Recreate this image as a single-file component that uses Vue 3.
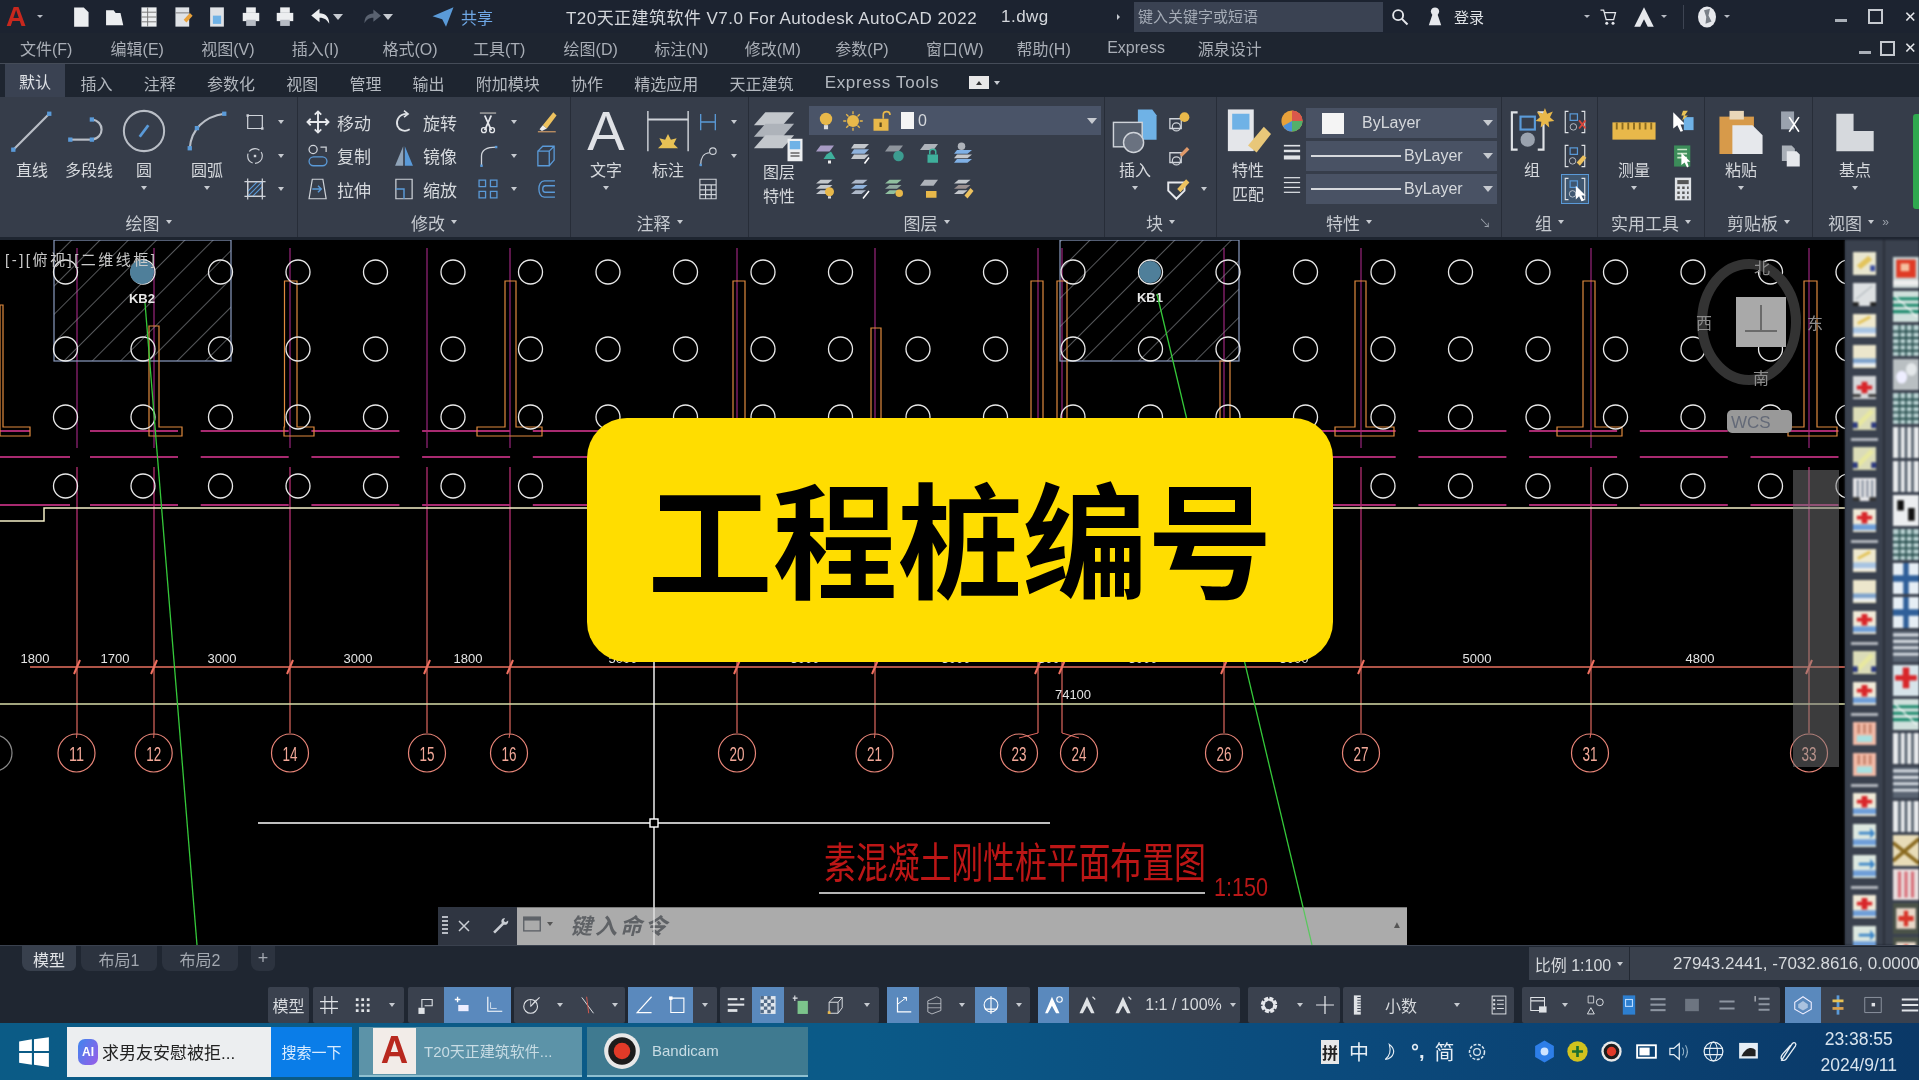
<script setup>
import { h } from 'vue'

const G = '#cfd3d9'
const B = '#5a9ad8'
const Y = '#e8b84a'
const line = (d, c = G, w = 1.5) => `<path d="${d}" fill="none" stroke="${c}" stroke-width="${w}"/>`
const dot = (x, y, c = B, s = 3) => `<rect x="${x - s / 2}" y="${y - s / 2}" width="${s}" height="${s}" fill="${c}"/>`

const icons = {
  line: line('M3 29L28 4', '#b9bec6') + dot(28, 4) + dot(3, 29),
  pline: line('M3 22H18', '#b9bec6') + line('M18 8C27 9 27 21 18 22', '#b9bec6') + dot(3, 22) + dot(18, 22) + dot(18, 8),
  circle: '<circle cx="16" cy="16" r="14" fill="none" stroke="#b9bec6" stroke-width="1.4"/>' + line('M13 20L19 12', B, 2),
  arc: line('M4 28C5 15 14 6 28 4', '#b9bec6') + dot(28, 4) + dot(4, 28) + dot(9, 14),
  rect: line('M7 8H25V24H7Z') + dot(7, 8, G) + dot(25, 24, G),
  ellipse: '<circle cx="16" cy="16" r="9" fill="none" stroke="#cfd3d9" stroke-width="1.4" stroke-dasharray="14 3"/>' + dot(16, 16, G),
  hatch: line('M7 7H25V25H7Z') + line('M7 19L19 7M7 25L25 7M13 25L25 13', B, 1.5) + line('M3 7H29M3 25H29M7 3V29M25 3V29'),
  move: line('M16 3V29M3 16H29', '#e6e8ec', 2.4) + line('M12 7L16 3L20 7M12 25L16 29L20 25M7 12L3 16L7 20M25 12L29 16L25 20', '#e6e8ec', 2.2),
  rotate: line('M20 6C8 6 6 16 8 21C10 26 17 29 23 25', '#dfe2e6', 2.2) + line('M16 2L21 6L16 10', '#dfe2e6', 2),
  copy: '<circle cx="10" cy="8" r="5" fill="none" stroke="#cfd3d9" stroke-width="1.6"/>' + line('M19 5H26V11', G, 1.6) + '<rect x="5" y="17" width="22" height="11" rx="5.5" fill="none" stroke="#5a9ad8" stroke-width="1.6"/>',
  mirror: `<path d="M15 4V28H5Z" fill="#8fa3b8"/><path d="M17 4V28H27Z" fill="#5a9ad8"/>`,
  stretch: line('M9 4H22L26 28H5Z', G) + line('M9 16H20M16 12L20 16L16 20', B, 1.8),
  scale: line('M6 4H26V28H6Z') + line('M6 16H16V28', B, 1.8),
  trim: line('M6 5H26', '#999', 2) + line('M12 8L20 26M20 8L12 26', '#e6e8ec', 2.2) + '<circle cx="11" cy="26" r="3" fill="none" stroke="#e6e8ec" stroke-width="1.6"/><circle cx="21" cy="26" r="3" fill="none" stroke="#e6e8ec" stroke-width="1.6"/>',
  erase: line('M6 28H28', '#c96', 1.5) + '<path d="M12 20L25 4L29 8L17 24Z" fill="#edc25f"/><path d="M12 20L17 24L11 27L8 25Z" fill="#eee"/>',
  fillet: line('M8 28V16C8 9 13 5 26 5', G, 1.6) + dot(8, 28) + dot(26, 5),
  cube: line('M6 10H20V28H6ZM6 10L12 4H26V21L20 28M20 10L26 4', B, 1.6),
  array: line('M5 5H13V13H5ZM19 5H27V13H19ZM5 19H13V27H5ZM19 19H27V27H19Z', B, 1.6),
  offset: line('M27 6H14C5 6 5 26 14 26H27', B, 1.6) + line('M27 12H15C11 12 11 20 15 20H27', B, 1.6),
  dim: line('M2 2V30M30 2V30', G, 1) + line('M2 8H30', G, 1.4) + '<path d="M16 18l2 4 4-1-2 4 3 3H9l3-3-2-4 4 1Z" fill="#e8c255"/>',
  dimh: line('M7 6V26M25 6V26M7 16H25', B, 1.6),
  leader: line('M7 27C7 18 11 12 18 12', G, 1.5) + '<circle cx="22" cy="10" r="4" fill="none" stroke="#cfd3d9" stroke-width="1.4"/>' + dot(7, 27),
  table: line('M6 4H26V28H6ZM6 11H26M6 17H26M6 23H26M13 11V28M20 11V28', '#cfd3d9', 1.4),
  layers: '<path d="M10 3H30L22 12H2Z" fill="#c3c7cc"/><path d="M10 11H30L22 20H2Z" fill="#aeb3ba"/><path d="M10 19H30L22 28H2Z" fill="#c3c7cc"/>',
  phone: '<rect x="6" y="1" width="20" height="30" fill="#eceef0"/><rect x="9" y="4" width="14" height="11" fill="#6fb2e6"/>' + line('M10 20H22M10 24H22', '#666', 2),
  bulb: `<circle cx="16" cy="13" r="9" fill="${Y}"/><rect x="13" y="22" width="6" height="6" fill="#ddd"/>`,
  sun: `<circle cx="16" cy="16" r="8" fill="${Y}"/>` + line('M16 3V7M16 25V29M3 16H7M25 16H29M7 7L10 10M22 22L25 25M25 7L22 10M10 22L7 25', Y, 1.8),
  lock: `<rect x="6" y="13" width="20" height="16" fill="${Y}"/>` + line('M19 13V8C19 2 28 2 28 8', Y, 2.2) + '<rect x="14" y="18" width="3" height="6" fill="#5b4a1d"/>',
  lyA: '<path d="M10 6H28L22 14H4Z" fill="#a79bc4"/><path d="M18 18L24 14L30 24H14Z" fill="#3fb09c"/><rect x="20" y="26" width="4" height="4" fill="#eee"/>',
  lyB: '<path d="M8 4H28L22 10H4Z" fill="#c3c7cc"/><path d="M8 11H28L22 17H4Z" fill="#8fb2dc"/><path d="M8 18H28L22 24H4Z" fill="#c3c7cc"/>' + line('M22 30L28 22', '#fff', 2),
  lyC: '<path d="M10 6H28L22 14H4Z" fill="#8e949c"/><circle cx="22" cy="20" r="7" fill="#3c9c90"/>',
  lyD: '<path d="M10 4H28L22 12H4Z" fill="#aeb3ba"/><rect x="14" y="18" width="14" height="11" fill="#3fb09c"/>' + line('M17 18V14C17 10 25 10 25 14V18', '#3fb09c', 2),
  lyE: '<circle cx="14" cy="7" r="5" fill="#aeb3ba"/><path d="M8 12H28L22 17H4Z" fill="#7fb0e6"/><path d="M8 18H28L22 23H4Z" fill="#c3c7cc"/><path d="M8 24H28L22 29H4Z" fill="#7fb0e6"/>',
  lyF: '<path d="M10 5H26L20 10H4Z" fill="#c3c7cc"/><path d="M10 12H26L20 17H4Z" fill="#c3c7cc"/><path d="M10 19H24L18 24H4Z" fill="#c3c7cc"/>' + `<circle cx="22" cy="21" r="6" fill="${Y}"/><rect x="20" y="27" width="4" height="3" fill="#ddd"/>`,
  lyG: '<path d="M10 5H26L20 10H4Z" fill="#aeb8c8"/><path d="M10 12H26L20 17H4Z" fill="#8fb2dc"/><path d="M10 19H24L18 24H4Z" fill="#aeb8c8"/>' + line('M20 30L28 20', '#fff', 2),
  lyH: '<path d="M10 5H26L20 10H4Z" fill="#8fbf9f"/><path d="M10 12H26L20 17H4Z" fill="#8fa89f"/><path d="M10 19H22L16 24H4Z" fill="#8fbf9f"/>' + `<circle cx="23" cy="23" r="5" fill="${Y}"/>`,
  lyI: '<path d="M10 5H28L22 13H4Z" fill="#aeb3ba"/>' + `<rect x="12" y="20" width="14" height="9" fill="${Y}"/>`,
  lyJ: '<path d="M10 5H26L20 10H4Z" fill="#c3c7cc"/><path d="M10 12H26L20 17H4Z" fill="#9a8f8f"/><path d="M10 19H22L16 24H4Z" fill="#c3c7cc"/><path d="M18 26L26 16L30 20L22 30Z" fill="#edc25f"/>',
  insert: '<path d="M18 1H28L31 5V22H18Z" fill="#6fb2e6"/><rect x="1" y="10" width="20" height="17" fill="#555e6c" stroke="#cfd3d9"/><circle cx="15" cy="24" r="7" fill="#6a7280" stroke="#cfd3d9"/>',
  blockA: line('M6 12H20V24H6Z', G, 1.6) + `<circle cx="14" cy="22" r="5" fill="none" stroke="#cfd3d9" stroke-width="1.5"/><circle cx="24" cy="10" r="6" fill="${Y}"/>`,
  blockB: line('M6 12H20V24H6Z', G, 1.6) + '<circle cx="14" cy="22" r="5" fill="none" stroke="#cfd3d9" stroke-width="1.5"/><path d="M18 14L27 5L30 8L21 17Z" fill="#e09a6a"/>',
  blockC: '<path d="M4 8H24V18L14 28L4 18Z" fill="none" stroke="#e6e8ec" stroke-width="2.4"/><path d="M15 16L26 4L30 8L19 20Z" fill="#edc25f"/>',
  match: '<rect x="2" y="1" width="18" height="29" fill="#e4e6ea"/><rect x="5" y="4" width="12" height="11" fill="#6fb2e6"/><path d="M16 26L27 13L32 18L22 31Z" fill="#e8c779"/>',
  wheel: '<circle cx="16" cy="16" r="13" fill="#e8a13a"/><path d="M16 16L16 3A13 13 0 0 1 29 16Z" fill="#d9584c"/><path d="M16 16L29 16A13 13 0 0 1 16 29Z" fill="#54b06a"/><path d="M16 16L16 29A13 13 0 0 1 5 22Z" fill="#4c8fd9"/>',
  weight: '<rect x="6" y="6" width="20" height="2" fill="#dfe2e6"/><rect x="6" y="12" width="20" height="3" fill="#dfe2e6"/><rect x="6" y="19" width="20" height="5" fill="#dfe2e6"/>',
  ltype: line('M6 7H26', '#dfe2e6', 1.5) + line('M6 13H26', '#dfe2e6', 1.5) + line('M6 19H26', '#dfe2e6', 1.5) + line('M6 25H26', '#dfe2e6', 1.5),
  group: line('M6 3H2V29H6M20 3H24V29H20', '#dfe2e6', 1.5) + `<rect x="8" y="6" width="10" height="9" fill="none" stroke="${B}" stroke-width="1.5"/><circle cx="13" cy="22" r="5" fill="#9aa2ae"/><path d="M25 0l1.5 4 4-1.5-2 4 3 2.5-4 .5.5 4-3-2.5-3 2.5.5-4-4-.5 3-2.5-2-4 4 1.5Z" fill="${Y}"/>`,
  groupX: line('M8 3H4V29H8M24 3H28V29H24', '#dfe2e6', 1.4) + `<rect x="10" y="6" width="9" height="8" fill="none" stroke="${B}" stroke-width="1.5"/><circle cx="14" cy="22" r="4" fill="none" stroke="#cfd3d9"/>` + line('M21 14L29 24M29 14L21 24', '#d9483c', 2.2),
  groupE: line('M8 3H4V29H8M24 3H28V29H24', '#dfe2e6', 1.4) + `<rect x="10" y="6" width="9" height="8" fill="none" stroke="${B}" stroke-width="1.5"/><circle cx="13" cy="22" r="4" fill="none" stroke="#cfd3d9"/><path d="M18 24L26 15L30 18L22 28Z" fill="#edc25f"/>`,
  groupS: line('M8 3H4V29H8M24 3H28V29H24', '#dfe2e6', 1.4) + `<rect x="10" y="6" width="9" height="8" fill="none" stroke="${B}" stroke-width="1.5"/><circle cx="13" cy="22" r="4" fill="none" stroke="#cfd3d9"/><path d="M17 12V29L21 25L24 31L27 30L24 24L29 24Z" fill="#fff"/>`,
  ruler: `<rect x="1" y="10" width="30" height="12" fill="${Y}"/>` + line('M4 10V15M8 10V15M12 10V15M16 10V15M20 10V15M24 10V15M28 10V15', '#8a6a20', 1.3),
  quick: '<path d="M4 4V24L9 20L13 28L16 27L13 19L19 19Z" fill="#fff"/><rect x="17" y="10" width="12" height="16" fill="#6fb2e6"/><path d="M16 2L22 2L18 8H22L15 14L17 8H14Z" fill="#e8c255"/>',
  board: '<rect x="5" y="3" width="20" height="26" fill="#3c8d5a"/>' + line('M9 8H21M9 13H21M9 18H21', '#c8e8c8', 2) + '<path d="M14 12V27L18 24L21 30L23 29L21 23L25 23Z" fill="#fff"/>',
  calc: '<rect x="6" y="2" width="20" height="28" fill="#dfe2e6"/><rect x="9" y="5" width="14" height="5" fill="#555"/><path d="M9 13h3v3H9zM15 13h3v3h-3zM21 13h2v3h-2zM9 19h3v3H9zM15 19h3v3h-3zM21 19h2v3h-2zM9 25h3v3H9zM15 25h3v3h-3zM21 25h2v3h-2z" fill="#555"/>',
  paste: '<rect x="1" y="6" width="24" height="26" fill="#d79a4a"/><rect x="8" y="2" width="10" height="6" fill="#e9d7b9"/><path d="M10 12H24L31 19V32H10Z" fill="#e6e8ec"/>',
  cut: '<rect x="5" y="3" width="16" height="22" fill="#9aa2ae"/>' + line('M15 10L27 28M27 10L15 28', '#fff', 2),
  pcopy: '<path d="M6 3H18L22 7V22H6Z" fill="#aab0b8"/><path d="M12 10H24L28 14V29H12Z" fill="#e6e8ec"/>',
  base: '<path d="M3 4H15V16H29V30H3Z" fill="#d6d9dd"/>',
  search: '<circle cx="13" cy="13" r="8" fill="none" stroke="#e6e8ec" stroke-width="3"/>' + line('M19 19L28 28', '#e6e8ec', 3.2),
  user: '<circle cx="16" cy="8" r="6" fill="#e6e8ec"/><path d="M12 13H20L25 28H7Z" fill="#e6e8ec"/>',
  cart: line('M4 5H9L13 20H25L28 9H11', '#e6e8ec', 2) + '<circle cx="14" cy="26" r="2.4" fill="#e6e8ec"/><circle cx="24" cy="26" r="2.4" fill="#e6e8ec"/>',
  aTri: '<path d="M16 3L29 29H21L16 19L11 29H3Z" fill="#e6e8ec"/>',
  globe: '<ellipse cx="16" cy="16" rx="12" ry="14" fill="#e6e8ec"/><path d="M12 7L20 5L18 14L22 22L14 25L15 16Z" fill="#7a8088"/>',
  file: '<path d="M6 2H20L27 9V30H6Z" fill="#eceef0"/>',
  open: '<path d="M3 6H14L17 10H24L28 28H3Z" fill="#eceef0"/>',
  save: '<rect x="5" y="2" width="22" height="28" fill="#eceef0"/>' + line('M5 9H27M5 16H27M5 23H27M14 2V30', '#777', 1.4),
  saveas: '<rect x="5" y="2" width="20" height="28" fill="#dfe2e6"/><path d="M17 20L26 10L30 14L21 24Z" fill="#e8a13a"/>' + line('M5 10H25', '#777', 1.4),
  plot: '<rect x="6" y="2" width="20" height="28" fill="#dfe2e6"/><rect x="10" y="14" width="12" height="12" fill="#6fb2e6"/>',
  printer: '<rect x="9" y="2" width="14" height="8" fill="#eceef0"/><rect x="4" y="10" width="24" height="12" fill="#eceef0"/><rect x="9" y="20" width="14" height="9" fill="#b7bcc4"/>',
  undo: '<path d="M14 5L3 14L14 23V17C21 17 24 20 27 25C27 16 22 11 14 11Z" fill="#eceef0"/>',
  redo: '<path d="M18 5L29 14L18 23V17C11 17 8 20 5 25C5 16 10 11 18 11Z" fill="#5a6270"/>',
  share: '<path d="M2 15L30 3L20 29L15 19Z" fill="#5a9ad8"/>',
  ctrlX: line('M8 8L24 24M24 8L8 24', '#c9cdd3', 2.4),
  wrench: '<path d="M24 3C19 3 17 8 19 11L5 25L8 28L22 14C26 15 30 12 29 7L25 10L22 8Z" fill="#c9cdd3"/>',
  cmd: '<rect x="4" y="6" width="24" height="20" fill="none" stroke="#5e6268" stroke-width="2"/><rect x="4" y="6" width="24" height="5" fill="#5e6268"/>',
  sGrid: line('M10 3V29M20 3V29M3 11H29M3 21H29', '#dfe2e6', 1.7),
  sDots: '<path d="M7 6h4v4H7zM15 6h4v4h-4zM23 6h4v4h-4zM7 14h4v4H7zM15 14h4v4h-4zM23 14h4v4h-4zM7 22h4v4H7zM15 22h4v4h-4zM23 22h4v4h-4z" fill="#dfe2e6"/>',
  sMode: '<rect x="5" y="20" width="9" height="9" fill="#dfe2e6"/>' + line('M10 20V8H25V17H14', '#dfe2e6', 1.6),
  sPlus: line('M7 8H15M11 4V12', '#fff', 2) + '<rect x="12" y="16" width="15" height="9" fill="#eef"/>',
  sOrtho: line('M7 4V25H28', '#fff', 1.6) + line('M11 12V21H20', '#dbe6f2', 1.3),
  sPolar: '<circle cx="14" cy="18" r="10" fill="none" stroke="#dfe2e6" stroke-width="1.6"/>' + line('M14 18L27 5', '#dfe2e6', 1.6) + line('M14 18L22 8M14 9V18', '#dfe2e6', 1),
  sCross: line('M7 5L24 28', '#dfe2e6', 1.4) + line('M14 4L17 28', '#d9584c', 1.4),
  sAngle: line('M27 4L6 27H27', '#fff', 1.7),
  sBox: line('M7 6H26V27H7Z', '#fff', 1.6) + dot(7, 6, '#fff', 5),
  sWeight: '<rect x="4" y="6" width="14" height="3" fill="#dfe2e6"/><rect x="22" y="6" width="6" height="3" fill="#dfe2e6"/><rect x="4" y="14" width="24" height="3" fill="#dfe2e6"/><rect x="4" y="22" width="14" height="4" fill="#dfe2e6"/>',
  sCheck: '<rect x="5" y="3" width="22" height="26" fill="#dfe6ee"/><path d="M5 3h5v5H5zM15 3h5v5h-5zM10 8h5v5h-5zM20 8h5v5h-5zM5 13h5v5H5zM15 13h5v5h-5zM10 18h5v5h-5zM20 18h5v5h-5zM5 23h5v5H5zM15 23h5v5h-5z" fill="#526a86"/>',
  sGreen: '<rect x="11" y="10" width="15" height="19" fill="#7cc48c"/>' + line('M4 6H11M7 2V10', '#dfe2e6', 1.6),
  sCube: line('M6 12H19V28H6ZM6 12L13 5H25V20L19 28M19 12L25 5', '#dfe2e6', 1.4) + dot(6, 27, Y, 4),
  sXY: line('M8 5V26H28', '#fff', 1.8) + line('M8 15L21 5M21 5L16 5M21 5L21 10', '#fff', 1.4),
  sIso: line('M7 10L20 4L26 7V24L13 29L7 26Z', '#c9cdd3', 1.2) + line('M7 14H26M7 20H26', '#c9cdd3', 1),
  sGizmo: '<circle cx="16" cy="16" r="10" fill="none" stroke="#fff" stroke-width="1.6"/>' + line('M16 3V29M7 22L25 22', '#fff', 1.6),
  sAnno: '<path d="M13 4L24 28H19L13 17L7 28H3Z" fill="#fff"/><circle cx="24" cy="8" r="4" fill="none" stroke="#fff" stroke-width="1.6"/>',
  sAnnoB: '<path d="M16 4L27 28H22L16 17L10 28H5Z" fill="#dfe2e6"/>' + line('M24 4L28 8', '#dfe2e6', 1.6),
  sGear: '<circle cx="16" cy="16" r="9" fill="none" stroke="#e6e8ec" stroke-width="6" stroke-dasharray="5 2"/><circle cx="16" cy="16" r="8" fill="none" stroke="#e6e8ec" stroke-width="3"/>',
  sAdd: line('M16 3V29M3 16H29', '#e6e8ec', 1.8),
  sRuler: '<rect x="10" y="2" width="10" height="28" fill="#dfe2e6"/>' + line('M15 5H20M15 9H20M15 13H20M15 17H20M15 21H20M15 25H20', '#3a4250', 1.5),
  sList: '<rect x="6" y="3" width="20" height="26" fill="none" stroke="#dfe2e6" stroke-width="1.4"/>' + line('M13 9H23M13 15H23M13 21H23', '#dfe2e6', 1.5) + dot(9, 9, '#dfe2e6') + dot(9, 15, '#dfe2e6') + dot(9, 21, '#dfe2e6'),
  sWin: line('M4 5H24V24H4ZM4 10H24', '#dfe2e6', 1.5) + '<rect x="16" y="18" width="11" height="9" fill="#dfe2e6"/>',
  sTool: line('M6 3H14V13H6Z', '#dfe2e6', 1.2) + '<circle cx="23" cy="12" r="5" fill="none" stroke="#dfe2e6" stroke-width="1.4"/>' + line('M10 20L5 29H15Z', '#dfe2e6', 1.4),
  sBlue: '<rect x="7" y="2" width="18" height="28" fill="#2d7fd0"/><rect x="11" y="8" width="10" height="10" fill="none" stroke="#bcdcff" stroke-width="1.6"/>',
  sBars: '<rect x="5" y="6" width="22" height="3" fill="#8d95a1"/><rect x="5" y="14" width="22" height="3" fill="#8d95a1"/><rect x="5" y="22" width="22" height="3" fill="#8d95a1"/>',
  sSolid: '<rect x="6" y="7" width="20" height="18" fill="#6d7581"/>',
  sSwap: line('M5 11H27M5 21H27', '#8d95a1', 3),
  sLst: line('M11 7H27M11 15H27M11 23H27', '#8d95a1', 3) + line('M6 3V11', '#dfe2e6', 1.4),
  sHex: '<path d="M16 4L28 12V22L16 29L4 22V12Z" fill="none" stroke="#eef" stroke-width="1.6"/><path d="M16 10L23 15V20L16 24L9 20V15Z" fill="#dfe8f5" opacity=".6"/>',
  sLight: '<rect x="14" y="2" width="4" height="28" fill="#5a9ad8"/><rect x="8" y="8" width="16" height="4" fill="#e8c255"/><rect x="8" y="19" width="16" height="4" fill="#d9a04c"/>',
  sIso2: line('M4 5H28V27H4Z', '#9aa2ae', 1.2) + '<rect x="14" y="13" width="5" height="5" fill="#dfe2e6"/>',
  sMenu: line('M4 8H28M4 16H28M4 24H28', '#dfe2e6', 2.6),
  win: '<path d="M2 6L14 4V15H2ZM16 4L30 2V15H16ZM2 17H14V28L2 26ZM16 17H30V30L16 28Z" fill="#fff"/>',
  moon: line('M15 5C25 12 23 24 9 27C17 21 17 12 15 5Z', '#e6eef5', 1.6),
  trayGear: '<circle cx="16" cy="16" r="10" fill="none" stroke="#d9e6f0" stroke-width="2" stroke-dasharray="4 2"/><circle cx="16" cy="16" r="4.5" fill="none" stroke="#d9e6f0" stroke-width="1.6"/>',
  trayShield: '<path d="M16 2L28 9V23L16 30L4 23V9Z" fill="#2d7ee8"/><circle cx="16" cy="16" r="5" fill="#cfe4ff"/>',
  trayPlus: '<circle cx="16" cy="16" r="13" fill="#d2c21e"/>' + line('M16 9V23M9 16H23', '#1d6e30', 3.4),
  trayRec: '<circle cx="16" cy="16" r="13" fill="#e8e8e8"/><circle cx="16" cy="16" r="10" fill="#1c1c1c"/><circle cx="16" cy="16" r="6" fill="#e13a28"/>',
  trayBat: '<rect x="4" y="8" width="24" height="16" fill="none" stroke="#fff" stroke-width="2.4"/><rect x="7" y="11" width="13" height="10" fill="#fff"/>',
  traySound: '<path d="M5 12H10L17 6V26L10 20H5Z" fill="none" stroke="#e6eef5" stroke-width="1.6"/>' + line('M21 11C23 14 23 18 21 21M25 8C28 13 28 19 25 24', '#9ab8cc', 1.3),
  trayNet: '<circle cx="16" cy="16" r="12" fill="none" stroke="#e6eef5" stroke-width="1.6"/><ellipse cx="16" cy="16" rx="5" ry="12" fill="none" stroke="#e6eef5" stroke-width="1.3"/>' + line('M4 12H28M4 20H28', '#e6eef5', 1.3),
  trayImg: '<rect x="4" y="5" width="24" height="20" fill="#e6eef5"/><path d="M7 22C12 11 20 9 25 14V22Z" fill="#222"/>',
  trayPen: line('M8 28L22 6C25 3 28 6 26 9L14 26C10 30 5 25 10 19L20 8', '#e6eef5', 1.7),
}

const Ic = (p) => h('svg', { viewBox: '0 0 32 32', width: p.s || 22, height: p.s || 22, innerHTML: icons[p.n] || '' })
Ic.props = ['n', 's']

const Tile = (p) => {
  const d = {
    y: '<rect width="24" height="24" fill="#e9e6cf"/><path d="M4 14L16 4L20 8L8 18Z" fill="#e3c45c"/><rect x="18" y="14" width="5" height="6" fill="#3d4fa0"/>',
    w: '<rect width="24" height="24" fill="#dde0e2"/><path d="M3 17L20 3" stroke="#9aa3a8"/><rect y="20" width="6" height="4" fill="#222"/><rect x="18" y="20" width="6" height="4" fill="#222"/>',
    b: '<rect width="24" height="24" fill="#efe9cf"/><path d="M5 10L18 3" stroke="#e3c45c" stroke-width="3"/><rect y="14" width="24" height="6" fill="#a8c4e2"/><rect y="20" width="24" height="2" fill="#eee"/>',
    l: '<rect width="24" height="24" fill="#ece6cc"/><rect y="14" width="24" height="5" fill="#7fa3cc"/><rect y="19" width="24" height="3" fill="#e8eef4"/>',
    r: '<rect width="24" height="24" fill="#d6d8da"/><path d="M9 6H15V10H20V14H15V18H9V14H4V10H9Z" fill="#d8262a"/><rect y="19" width="8" height="3" fill="#333"/><rect x="16" y="19" width="8" height="3" fill="#333"/>',
    g: '<rect width="24" height="24" fill="#dbdcb8"/><path d="M4 20L20 4" stroke="#e8e8a0" stroke-width="5"/><rect y="16" width="5" height="6" fill="#2d3a80"/><rect x="19" y="16" width="5" height="6" fill="#2d3a80"/>',
    m: '<rect width="24" height="24" fill="#e8e8ea"/><path d="M5 2V20M10 2V20M15 2V20M20 2V20" stroke="#7a8494" stroke-width="2"/><rect y="20" width="7" height="4" fill="#333"/><rect x="17" y="20" width="7" height="4" fill="#333"/>',
    p: '<rect width="24" height="24" fill="#f1b9a6"/><path d="M6 2V12M12 2V12M18 2V12" stroke="#b8725a" stroke-width="2"/><rect x="4" y="14" width="16" height="7" fill="#a8e0e0"/>',
    c: '<rect width="24" height="24" fill="#f0ead8"/><path d="M9 3H15V7H20V11H15V15H9V11H4V7H9Z" fill="#d8262a"/><rect y="16" width="24" height="6" fill="#6f9ed8"/>',
    a: '<rect width="24" height="24" fill="#dde8e0"/><path d="M6 8H18V4L23 10L18 15V11H6Z" fill="#3d86c8"/><rect y="16" width="24" height="6" fill="#6f9ed8"/>',
    redb: '<rect width="24" height="24" fill="#c8d2d2"/><rect x="3" y="2" width="18" height="14" fill="#e03a24"/><rect x="7" y="5" width="8" height="6" fill="#f5c0a0"/><rect y="18" width="24" height="4" fill="#eee"/>',
    gr: '<rect width="24" height="24" fill="#cfe0dc"/><path d="M0 6H24M0 11H24M0 16H24" stroke="#1d8a6d" stroke-width="2.4"/><path d="M2 4L22 20" stroke="#fff"/>',
    gd: '<rect width="24" height="24" fill="#b7d0d0"/><path d="M0 5H24M0 10H24M0 15H24M0 20H24M6 0V24M12 0V24M18 0V24" stroke="#244a4a" stroke-width="1.5"/>',
    wh: '<rect width="24" height="24" fill="#b9bfc2"/><circle cx="8" cy="14" r="5" fill="#eef"/><circle cx="17" cy="8" r="5" fill="#e4e8ea"/>',
    st: '<rect width="24" height="24" fill="#e8eaec"/><path d="M6 0V24M12 0V24M18 0V24" stroke="#44505e" stroke-width="2.2"/>',
    li: '<rect width="24" height="24" fill="#5a6472"/><path d="M0 3H24M0 8H24M0 13H24M0 18H24" stroke="#dfe4ea" stroke-width="2"/>',
    bw: '<rect width="24" height="24" fill="#eceef0"/><path d="M4 4H10V12H4ZM14 10H20V20H14Z" fill="#111"/>',
    bc: '<rect width="24" height="24" fill="#e6eef5"/><path d="M12 0V24M0 12H24" stroke="#2f5f99" stroke-width="5"/>',
    rc: '<rect width="24" height="24" fill="#d7e4ea"/><path d="M9 2H15V8H22V12H15V18H9V12H2V8H9Z" fill="#d8262a"/>',
    dg: '<rect width="24" height="24" fill="#e8dcb8"/><path d="M0 20L24 3M0 6L24 22" stroke="#8a6a20" stroke-width="3"/>',
    rs: '<rect width="24" height="24" fill="#e8dede"/><path d="M6 2V22M12 2V22M18 2V22" stroke="#d9707a" stroke-width="3"/>',
    rd: '<rect width="24" height="24" fill="#4a5248"/><rect x="3" y="4" width="18" height="16" fill="#e8d8c8"/><path d="M10 6H14V10H19V14H14V18H10V14H5V10H10Z" fill="#d8362a"/>',
  }[p.k]
  return h('svg', { viewBox: '0 0 24 24', preserveAspectRatio: 'none', innerHTML: d })
}
Tile.props = ['k']

const qat = ['file', 'open', 'save', 'saveas', 'plot', 'printer', 'printer']
const menus = ['文件(F)', '编辑(E)', '视图(V)', '插入(I)', '格式(O)', '工具(T)', '绘图(D)', '标注(N)', '修改(M)', '参数(P)', '窗口(W)', '帮助(H)', 'Express', '源泉设计']
const tabs = ['默认', '插入', '注释', '参数化', '视图', '管理', '输出', '附加模块', '协作', '精选应用', '天正建筑', 'Express Tools']

const big = (w, ic, label, caret = true) => ({ k: 'big', w, ic, label, caret })
const col = (w, items) => ({ k: 'col', w, items })
const panels = [
  { title: '绘图', w: 298, pad: 2, tools: [big(60, 'line', ['直线'], false), big(54, 'pline', ['多段线'], false), big(56, 'circle', ['圆']), big(70, 'arc', ['圆弧']),
    col(56, [{ ic: 'rect', caret: 1 }, { ic: 'ellipse', caret: 1 }, { ic: 'hatch', caret: 1 }])] },
  { title: '修改', w: 273, pad: 7, tools: [
    col(86, [{ ic: 'move', t: '移动' }, { ic: 'copy', t: '复制' }, { ic: 'stretch', t: '拉伸' }]),
    col(84, [{ ic: 'rotate', t: '旋转' }, { ic: 'mirror', t: '镜像' }, { ic: 'scale', t: '缩放' }]),
    col(58, [{ ic: 'trim', caret: 1 }, { ic: 'fillet', caret: 1 }, { ic: 'array', caret: 1 }]),
    col(36, [{ ic: 'erase' }, { ic: 'cube' }, { ic: 'offset' }])] },
  { title: '注释', w: 178, tools: [big(70, 'text', ['文字']), big(54, 'dim', ['标注'], false),
    col(52, [{ ic: 'dimh', caret: 1 }, { ic: 'leader', caret: 1 }, { ic: 'table' }])] },
  { title: '图层', w: 356, tools: [{ k: 'layer' }] },
  { title: '块', w: 112, tools: [big(60, 'insert', ['插入']), col(50, [{ ic: 'blockA' }, { ic: 'blockB' }, { ic: 'blockC', caret: 1 }])] },
  { title: '特性', w: 285, more: true, tools: [{ k: 'props' }] },
  { title: '组', w: 96, tools: [big(60, 'group', ['组'], false), col(34, [{ ic: 'groupX' }, { ic: 'groupE' }, { ic: 'groupS', on: 1 }])] },
  { title: '实用工具', w: 107, tools: [big(72, 'ruler', ['测量']), col(34, [{ ic: 'quick' }, { ic: 'board' }, { ic: 'calc' }])] },
  { title: '剪贴板', w: 108, tools: [big(72, 'paste', ['粘贴']), col(36, [{ ic: 'cut' }, { ic: 'pcopy' }, {}])] },
  { title: '视图', w: 106, tools: [big(84, 'base', ['基点'])] },
]
const layerTop = ['lyA', 'lyB', 'lyC', 'lyD', 'lyE']
const layerBottom = ['lyF', 'lyG', 'lyH', 'lyI', 'lyJ']

const statusRaw = [
  { x: 268, items: [{ t: '模型', w: 41 }] },
  { x: 313, items: [{ ic: 'sGrid', w: 32 }, { ic: 'sDots', w: 34 }, { caret: 1, w: 25 }] },
  { x: 408, items: [{ ic: 'sMode', w: 36 }, { ic: 'sPlus', on: 1, w: 33 }, { ic: 'sOrtho', on: 1, w: 34 }] },
  { x: 514, items: [{ ic: 'sPolar', w: 36 }, { caret: 1, w: 20 }, { ic: 'sCross', w: 35 }, { caret: 1, w: 20 }] },
  { x: 628, items: [{ ic: 'sAngle', on: 1, w: 32 }, { ic: 'sBox', on: 1, w: 33 }, { caret: 1, w: 24 }] },
  { x: 720, items: [{ ic: 'sWeight', w: 32 }, { ic: 'sCheck', on: 1, w: 32 }, { ic: 'sGreen', w: 34 }, { ic: 'sCube', w: 36 }, { caret: 1, w: 25 }] },
  { x: 887, items: [{ ic: 'sXY', on: 1, w: 32 }, { ic: 'sIso', w: 30 }, { caret: 1, w: 26 }, { ic: 'sGizmo', on: 1, w: 32 }, { caret: 1, w: 23 }] },
  { x: 1038, items: [{ ic: 'sAnno', on: 1, w: 31 }, { ic: 'sAnnoB', w: 36 }, { ic: 'sAnnoB', w: 36 }, { t: '1:1 / 100%', w: 85 }, { caret: 1, w: 14 }] },
  { x: 1248, items: [{ ic: 'sGear', w: 42 }, { caret: 1, w: 20 }, { ic: 'sAdd', w: 30 }] },
  { x: 1343, items: [{ ic: 'sRuler', w: 30 }, { t: '小数', w: 56 }, { caret: 1, w: 55 }, { ic: 'sList', w: 30 }] },
  { x: 1522, items: [{ ic: 'sWin', w: 34 }, { caret: 1, w: 18 }, { ic: 'sTool', w: 42 }, { ic: 'sBlue', w: 26 }, { ic: 'sBars', w: 32 }, { ic: 'sSolid', w: 36 }, { ic: 'sSwap', w: 34 }, { ic: 'sLst', w: 36 }] },
  { x: 1785, items: [{ ic: 'sHex', on: 1, w: 36 }, { ic: 'sLight', w: 33 }, { ic: 'sIso2', w: 37 }, { ic: 'sMenu', w: 38 }] },
]
// gap in front of each group, so that the groups keep their place in the bar
let statusEnd = 0
const statusGroups = statusRaw.map((g) => {
  const gap = g.x - statusEnd
  statusEnd = g.x + g.items.reduce((a, it) => a + it.w, 0)
  return { gap, items: g.items }
})

const trayIcons = [
  { n: 'trayShield', m: 0 }, { n: 'trayPlus', m: 8 }, { n: 'trayRec', m: 9 }, { n: 'trayBat', m: 10 },
  { n: 'traySound', m: 7 }, { n: 'trayNet', m: 10 }, { n: 'trayImg', m: 10 }, { n: 'trayPen', m: 14 },
]

const leftTiles = ['y', 'w', 'b', 'l', 'r', 'g', '-', 'g', 'm', 'c', '-', 'b', 'l', 'c', '-', 'g', 'c', '-', 'p', 'p', '-', 'c', 'a', 'a', '-', 'c', 'a']
const rightTiles = ['redb', 'gr', 'gd', 'wh', 'gd', 'st', 'st', 'bw', 'gd', 'bc', 'bc', 'li', 'rc', 'gr', 'st', 'li', 'st', 'dg', 'rs', 'rd', 'rd']

const pileX = Array.from({ length: 24 }, (_, i) => 65.5 + 77.5 * i)
const pileY = [272, 349, 417, 486]
const piles = pileY.flatMap((y) => pileX.map((x) => ({ x, y })))

const segs = Array.from({ length: 16 }, (_, i) => 90 + 110.7 * i)
const axisLines = [77, 154, 290, 427, 510, 737, 875, 1038, 1062, 1224, 1361, 1591, 1809]
const axes = [
  { n: '11', x: 76.5, l: 77 }, { n: '12', x: 153.7, l: 154 }, { n: '14', x: 290, l: 290 }, { n: '15', x: 427, l: 427 },
  { n: '16', x: 509, l: 510 }, { n: '20', x: 737, l: 737 }, { n: '21', x: 874.5, l: 875 }, { n: '23', x: 1019, l: 1038 },
  { n: '24', x: 1079, l: 1062 }, { n: '26', x: 1224, l: 1224 }, { n: '27', x: 1361, l: 1361 }, { n: '31', x: 1590, l: 1591 }, { n: '33', x: 1809, l: 1809 },
]
const dims = [
  { t: '1800', x: 35 }, { t: '1700', x: 115 }, { t: '3000', x: 222 }, { t: '3000', x: 358 }, { t: '1800', x: 468 },
  { t: '5000', x: 623 }, { t: '3000', x: 805 }, { t: '3000', x: 956 }, { t: '500', x: 1049 }, { t: '3000', x: 1143 },
  { t: '3000', x: 1294 }, { t: '5000', x: 1477 }, { t: '4800', x: 1700 },
]
const walls = [
  [0, 3, 305, 0, 30], [149, 159, 326, 149, 182], [284.5, 297, 281, 284, 314], [505, 516, 281, 477, 542],
  [733, 745, 281, 720, 760], [871, 881, 328, 860, 900], [1031, 1043, 281, 1020, 1060], [1057, 1067, 281, 1050, 1080],
  [1220, 1230, 361, 1205, 1245], [1355, 1366, 281, 1335, 1394], [1583, 1595, 281, 1557, 1622], [1804, 1817, 281, 1788, 1837],
]
const wallPath = ([a, b, top, fa, fb]) => `M${a} ${top}H${b}V427H${fb}V436H${fa}V427H${a}Z`
</script>

<template>
  <div class="app">
    <header class="titlebar">
      <div class="title-left">
        <span class="logo">A</span>
        <span class="mini-caret"></span>
        <div class="qat">
          <Ic v-for="(q, i) in qat" :key="i" :n="q" :s="22" />
        </div>
        <Ic class="undo" n="undo" :s="24" />
        <span class="caret"></span>
        <Ic class="redo" n="redo" :s="22" />
        <span class="caret"></span>
        <Ic class="share" n="share" :s="24" />
        <span class="share-text">共享</span>
      </div>
      <div class="title-mid">
        <span>T20天正建筑软件 V7.0 For Autodesk AutoCAD 2022</span>
        <span class="doc">1.dwg</span>
        <span class="mini-caret right"></span>
      </div>
      <div class="searchbox"><span>键入关键字或短语</span></div>
      <div class="title-right">
        <Ic n="search" :s="20" />
        <Ic n="user" :s="22" />
        <span class="login">登录</span>
        <span class="mini-caret far"></span>
        <Ic n="cart" :s="20" />
        <Ic n="aTri" :s="24" />
        <span class="mini-caret"></span>
        <i class="sep"></i>
        <Ic n="globe" :s="24" />
        <span class="mini-caret"></span>
        <div class="win-btns">
          <span class="win-min"></span>
          <span class="win-max"></span>
          <span class="win-close">✕</span>
        </div>
      </div>
    </header>

    <nav class="menubar">
      <span v-for="m in menus" :key="m" class="menu-item">{{ m }}</span>
      <div class="win-btns doc-btns">
        <span class="win-min"></span>
        <span class="win-max"></span>
        <span class="win-close">✕</span>
      </div>
    </nav>

    <div class="tabbar">
      <span v-for="(t, i) in tabs" :key="t" class="tab" :class="{ active: i === 0, latin: t === 'Express Tools' }">{{ t }}</span>
      <span class="tab-switch"><i></i></span>
      <span class="caret small"></span>
    </div>

    <div class="ribbon">
      <section v-for="p in panels" :key="p.title" class="panel" :style="{ width: p.w + 'px' }">
        <div class="panel-body" :style="{ paddingLeft: (p.pad || 0) + 'px' }">
          <template v-for="(tool, ti) in p.tools" :key="ti">
            <div v-if="tool.k === 'big'" class="big" :style="{ width: tool.w + 'px' }">
              <span v-if="tool.ic === 'text'" class="big-a">A</span>
              <Ic v-else :n="tool.ic" :s="46" />
              <span v-for="l in tool.label" :key="l" class="big-label">{{ l }}</span>
              <span v-if="tool.caret" class="caret small"></span>
            </div>

            <div v-else-if="tool.k === 'col'" class="tool-col" :style="{ width: tool.w + 'px' }">
              <div v-for="(it, ii) in tool.items" :key="ii" class="tool-row" :class="{ on: it.on }">
                <Ic v-if="it.ic" :n="it.ic" :s="26" />
                <span v-if="it.t" class="tool-text">{{ it.t }}</span>
                <span v-if="it.caret" class="caret small"></span>
              </div>
            </div>

            <div v-else-if="tool.k === 'layer'" class="layer-wrap">
              <div class="big layer-big">
                <div class="layer-stack">
                  <Ic n="layers" :s="46" />
                  <Ic class="layer-phone" n="phone" :s="24" />
                </div>
                <span class="big-label">图层</span>
                <span class="big-label">特性</span>
              </div>
              <div class="layer-right">
                <div class="combo layer-combo">
                  <Ic n="bulb" :s="22" />
                  <Ic n="sun" :s="24" />
                  <Ic n="lock" :s="24" />
                  <i class="swatch"></i>
                  <span class="combo-text">0</span>
                  <span class="caret combo-caret"></span>
                </div>
                <div class="layer-row">
                  <Ic v-for="n in layerTop" :key="n" :n="n" :s="24" />
                </div>
                <div class="layer-row">
                  <Ic v-for="n in layerBottom" :key="n" :n="n" :s="24" />
                </div>
              </div>
            </div>

            <div v-else-if="tool.k === 'props'" class="props-wrap">
              <div class="big" style="width: 62px">
                <Ic n="match" :s="46" />
                <span class="big-label">特性</span>
                <span class="big-label">匹配</span>
              </div>
              <div class="props-icons">
                <Ic n="wheel" :s="26" />
                <Ic n="weight" :s="26" />
                <Ic n="ltype" :s="26" />
              </div>
              <div class="props-combos">
                <div class="combo"><i class="swatch wide"></i><span class="combo-text">ByLayer</span><span class="caret combo-caret"></span></div>
                <div class="combo"><i class="dash"></i><span class="combo-text tight">ByLayer</span><span class="caret combo-caret"></span></div>
                <div class="combo"><i class="dash"></i><span class="combo-text tight">ByLayer</span><span class="caret combo-caret"></span></div>
              </div>
            </div>
          </template>
          <i v-if="p.title === '视图'" class="green-bar"></i>
        </div>
        <div class="panel-title" :class="{ 'shift-s': p.more, 'shift-l': p.title === '视图' }">
          <span>{{ p.title }}</span><span class="caret small"></span>
          <span v-if="p.more" class="more">↘</span>
          <span v-if="p.title === '视图'" class="more near">»</span>
        </div>
      </section>
    </div>

    <main class="workspace">
      <div class="canvas">
        <svg class="drawing" width="1845" height="705" viewBox="0 240 1845 705">
          <defs>
            <pattern id="hatch" width="20" height="20" patternUnits="userSpaceOnUse" patternTransform="rotate(45)">
              <line x1="0" y1="0" x2="0" y2="20" stroke="#8f9296" stroke-width="1.2" />
            </pattern>
          </defs>

          <g v-for="v in axisLines" :key="v">
            <line :x1="v" y1="248" :x2="v" y2="448" stroke="#8e2273" stroke-width="1.3" />
            <line :x1="v" y1="467" :x2="v" y2="560" stroke="#b52e72" stroke-width="1.3" />
            <line :x1="v" y1="560" :x2="v" y2="733" stroke="#e0685f" stroke-width="1.2" />
            <line :x1="v - 3" y1="674" :x2="v + 3" y2="660" stroke="#f07060" stroke-width="2" />
          </g>

          <rect x="54" y="240" width="177" height="121" fill="url(#hatch)" stroke="#8a9cc0" stroke-width="1.2" />
          <rect x="1060" y="240" width="179" height="121" fill="url(#hatch)" stroke="#8a9cc0" stroke-width="1.2" />

          <g stroke="#a82a70" stroke-width="2" fill="none">
            <template v-for="y in [431, 457, 505]" :key="y">
              <line v-for="s in segs" :key="s" :x1="s" :y1="y" :x2="s + 88" :y2="y" />
              <line x1="0" :y1="y" :x2="y === 431 ? 30 : 70" :y2="y" />
            </template>
          </g>

          <path v-for="(w, i) in walls" :key="i" :d="wallPath(w)" fill="none" stroke="#df8a3e" stroke-width="1.2" />

          <circle v-for="(p, i) in piles" :key="i" :cx="p.x" :cy="p.y" r="12" fill="none" stroke="#e8e8e8" stroke-width="1.3" />

          <circle cx="142" cy="272" r="12" fill="#4f7f9a" />
          <circle cx="1150" cy="272" r="11" fill="#4f7f9a" />
          <text x="142" y="303" class="pile-tag">KB2</text>
          <text x="1150" y="302" class="pile-tag">KB1</text>

          <path d="M0 521H44V508H1845" fill="none" stroke="#f5efc8" stroke-width="1.5" />
          <line x1="30" y1="667" x2="1845" y2="667" stroke="#e8705f" stroke-width="1.4" />
          <line x1="0" y1="704" x2="1845" y2="704" stroke="#d8dca8" stroke-width="1.3" />

          <line x1="145" y1="303" x2="197" y2="945" stroke="#35c93a" stroke-width="1.3" />
          <line x1="1157" y1="294" x2="1312" y2="945" stroke="#35c93a" stroke-width="1.3" />

          <text v-for="d in dims" :key="d.x" :x="d.x" y="663" class="dim">{{ d.t }}</text>
          <text x="1073" y="699" class="dim">74100</text>

          <g v-for="a in axes" :key="a.n">
            <line v-if="a.x !== a.l" :x1="a.l" y1="733" :x2="a.x" y2="738" stroke="#e0685f" />
            <ellipse :cx="a.x" cy="753" rx="18.5" ry="19" fill="none" stroke="#e88578" stroke-width="1.2" />
            <text :x="a.x" y="761" class="axis-no" textLength="15" lengthAdjust="spacingAndGlyphs">{{ a.n }}</text>
          </g>
          <circle cx="-6" cy="753" r="18" fill="none" stroke="#8b8b8b" stroke-width="1.2" />

          <rect x="1793" y="470" width="46" height="297" fill="#77787a" fill-opacity=".5" />

          <line x1="654" y1="661" x2="654" y2="907" stroke="#fff" stroke-width="1.4" />
          <line x1="258" y1="823" x2="1050" y2="823" stroke="#fff" stroke-width="1.4" />
          <rect x="650" y="819" width="8" height="8" fill="#000" stroke="#fff" stroke-width="1.4" />

          <text class="plan-title" transform="translate(824,878) scale(1,1.3)" textLength="382" lengthAdjust="spacing">素混凝土刚性桩平面布置图</text>
          <line x1="819" y1="893" x2="1205" y2="893" stroke="#f2f2f2" stroke-width="1.4" />
          <text x="1214" y="896" class="plan-scale" textLength="54" lengthAdjust="spacingAndGlyphs">1:150</text>

          <text x="5" y="265" class="view-label" textLength="150" lengthAdjust="spacing">[-][俯视][二维线框]</text>

          <ellipse cx="1749" cy="322" rx="47" ry="58" fill="none" stroke="#333" stroke-width="10" />
          <rect x="1736" y="297" width="50" height="50" fill="#a9a9a9" />
          <path d="M1761 305V330M1745 331H1777" stroke="#6a6a6a" stroke-width="2" fill="none" />
          <text x="1762" y="274" class="cube-label">北</text>
          <text x="1704" y="329" class="cube-label">西</text>
          <text x="1815" y="329" class="cube-label">东</text>
          <text x="1761" y="384" class="cube-label">南</text>
          <rect x="1727" y="410" width="65" height="23" rx="5" fill="#999" />
          <text x="1731" y="428" class="wcs">WCS</text>
        </svg>

        <div class="title-card">工程桩编号</div>

        <div class="cmdline">
          <div class="cmd-left">
            <i class="grip"></i>
            <Ic n="ctrlX" :s="20" />
            <Ic class="wrench" n="wrench" :s="20" />
          </div>
          <div class="cmd-input">
            <Ic n="cmd" :s="22" />
            <span class="caret dark"></span>
            <span class="cmd-text">键入命令</span>
            <span class="cmd-up">▲</span>
          </div>
          <svg class="cmd-over" width="969" height="38">
            <line x1="216" y1="0" x2="216" y2="38" stroke="#eee" stroke-width="1.2" />
            <line x1="865" y1="0" x2="874" y2="38" stroke="#58c85c" stroke-width="1.2" />
          </svg>
        </div>
      </div>

      <aside class="palette">
        <div class="pal-col">
          <i class="pal-grip"></i>
          <template v-for="(k, i) in leftTiles" :key="i">
            <i v-if="k === '-'" class="pal-sep"></i>
            <Tile v-else class="pal-tile" :k="k" />
          </template>
        </div>
        <div class="pal-col right">
          <Tile v-for="(k, i) in rightTiles" :key="i" class="pal-tile wide" :k="k" />
        </div>
      </aside>
    </main>

    <div class="layoutbar">
      <div class="layout-tabs">
        <span class="ltab active">模型</span>
        <span class="ltab">布局1</span>
        <span class="ltab">布局2</span>
        <span class="ltab add">+</span>
      </div>
      <div class="coordbox">
        <div class="scale-box">比例 1:100 <span class="caret small"></span></div>
        <div class="coords">27943.2441, -7032.8616, 0.0000</div>
      </div>
    </div>

    <div class="statusbar">
      <div v-for="(g, i) in statusGroups" :key="i" class="st-group" :style="{ marginLeft: g.gap + 'px' }">
        <div v-for="(it, j) in g.items" :key="j" class="st-item" :class="{ on: it.on }" :style="{ width: it.w + 'px' }">
          <Ic v-if="it.ic" :n="it.ic" :s="22" />
          <span v-if="it.t">{{ it.t }}</span>
          <span v-if="it.caret" class="caret small"></span>
        </div>
      </div>
    </div>

    <footer class="taskbar">
      <Ic class="start" n="win" :s="34" />
      <div class="tb-browser">
        <span class="ai-badge">AI</span>
        <span class="tb-browser-text">求男友安慰被拒...</span>
      </div>
      <div class="tb-search">搜索一下</div>
      <div class="tb-app active">
        <span class="tb-cad"><b>A</b></span>
        <span class="tb-label">T20天正建筑软件...</span>
      </div>
      <div class="tb-app">
        <Ic class="tb-rec" n="trayRec" :s="44" />
        <span class="tb-label">Bandicam</span>
      </div>
      <div class="tray-ime">
        <b class="ime-pin">拼</b>
        <span>中</span>
        <Ic n="moon" :s="22" />
        <span class="ime-dot">°,</span>
        <span>简</span>
        <Ic n="trayGear" :s="24" />
      </div>
      <div class="tray-icons">
        <Ic v-for="t in trayIcons" :key="t.n" :n="t.n" :s="25" :style="{ marginLeft: t.m + 'px' }" />
      </div>
      <div class="clock">
        <span>23:38:55</span>
        <span>2024/9/11</span>
      </div>
    </footer>
  </div>
</template>

<style>
html, body {
  margin: 0;
  background: #000;
}
</style>

<style scoped>
.app {
  width: 1919px;
  height: 1080px;
  display: flex;
  flex-direction: column;
  overflow: hidden;
  background: #1e2530;
  color: #c6cad0;
  font-family: "Liberation Sans", "Noto Sans CJK SC", sans-serif;
  font-size: 15px;
}

/* the source is a video frame, everything but the card is a little soft */
.titlebar, .menubar, .tabbar, .ribbon, .statusbar, .layoutbar, .taskbar, .cmdline, .drawing {
  filter: blur(0.45px);
}

.palette {
  filter: blur(0.8px);
}

.titlebar {
  height: 33px;
  flex: none;
  display: flex;
  align-items: center;
  background: #1c2330;
}

.title-left {
  width: 566px;
  flex: none;
  display: flex;
  align-items: center;
  padding-left: 6px;
  box-sizing: border-box;
}

.logo {
  width: 26px;
  color: #c8281e;
  font-size: 28px;
  font-weight: 700;
  line-height: 1;
}

.qat {
  display: flex;
  gap: 12px;
  margin-left: 27px;
}

.undo { margin-left: 13px; }
.redo { margin-left: 18px; }
.share { margin-left: 38px; }

.share-text {
  margin-left: 6px;
  color: #6fa8e6;
  font-size: 16px;
}

.mini-caret {
  width: 0;
  height: 0;
  border: 3px solid transparent;
  border-top-color: #b8bcc4;
  margin: 3px 0 0 5px;
}

.mini-caret.right {
  border-top-color: transparent;
  border-left-color: #c6cad0;
  margin: 0 0 0 68px;
}

.title-mid {
  width: 568px;
  flex: none;
  display: flex;
  align-items: center;
  color: #d4d7dc;
  font-size: 17px;
  letter-spacing: 0.45px;
  white-space: nowrap;
}

.doc { margin-left: 24px; }

.searchbox {
  width: 249px;
  height: 30px;
  flex: none;
  background: #3a4252;
  color: #a4abb6;
  font-size: 15px;
  line-height: 30px;
  padding-left: 4px;
  box-sizing: border-box;
}

.title-right {
  flex: 1;
  display: flex;
  align-items: center;
  padding-left: 7px;
}

.title-right > svg + svg { margin-left: 14px; }

.login {
  margin-left: 8px;
  color: #dfe2e6;
  font-size: 15px;
}

.mini-caret.far { margin-left: 100px; margin-right: 8px; }

.sep {
  width: 1px;
  height: 24px;
  background: #3d4452;
  margin: 0 11px 0 16px;
}

.win-btns {
  margin-left: auto;
  display: flex;
  align-items: center;
  gap: 21px;
  padding-right: 2px;
}

.win-min {
  width: 12px;
  height: 3px;
  margin-top: 8px;
  background: #aab0b8;
}

.win-max {
  width: 11px;
  height: 11px;
  border: 2px solid #c6cad0;
}

.win-close {
  color: #e4e6ea;
  font-size: 15px;
}

.menubar {
  height: 30px;
  flex: none;
  display: flex;
  align-items: center;
  padding-left: 20px;
  border-bottom: 1px solid #454c58;
  background: #1e2530;
}

.menu-item {
  width: 90.6px;
  flex: none;
  color: #a9aeb6;
  font-size: 16px;
  white-space: nowrap;
}

.doc-btns {
  gap: 9px;
  margin-left: auto;
}

.tabbar {
  height: 33px;
  flex: none;
  display: flex;
  align-items: center;
  padding-top: 4px;
  box-sizing: border-box;
  background: #1e2530;
}

.tab {
  height: 100%;
  display: flex;
  align-items: center;
  padding: 0 15.6px;
  color: #b3b8bf;
  font-size: 16px;
  white-space: nowrap;
}

.tab.latin {
  font-size: 17px;
  letter-spacing: 0.7px;
}

.tab.active {
  width: 60px;
  margin-left: 5px;
  padding: 0;
  margin-top: -4px;
  height: 33px;
  justify-content: center;
  background: #3a4252;
  color: #e0e3e7;
}

.tab-switch {
  width: 20px;
  height: 13px;
  margin-left: 14px;
  background: #e8e8e8;
  display: flex;
  align-items: center;
  justify-content: center;
}

.tab-switch i {
  width: 0;
  height: 0;
  border: 3px solid transparent;
  border-bottom: 4px solid #333;
  margin-top: -3px;
}

.caret {
  display: inline-block;
  width: 0;
  height: 0;
  border-left: 5px solid transparent;
  border-right: 5px solid transparent;
  border-top: 6px solid #c6cad0;
}

.caret.small {
  border-left-width: 3.5px;
  border-right-width: 3.5px;
  border-top-width: 4px;
  margin-left: 6px;
}

.tabbar .caret.small { margin-left: 5px; }

.caret.dark {
  border-left-width: 3px;
  border-right-width: 3px;
  border-top: 4px solid #555;
  margin-left: 4px;
}

.ribbon {
  height: 143px;
  flex: none;
  display: flex;
  background: #363d4a;
  border-bottom: 3px solid #1e2530;
  box-sizing: border-box;
}

.panel {
  flex: none;
  display: flex;
  flex-direction: column;
  border-right: 1px solid #272d38;
  box-sizing: border-box;
}

.panel:last-child { border-right: 0; }

.panel-body {
  flex: 1;
  display: flex;
  padding-top: 11px;
  min-height: 0;
}

.panel-title {
  position: relative;
  height: 26px;
  flex: none;
  display: flex;
  align-items: center;
  justify-content: center;
  padding-bottom: 4px;
  box-sizing: border-box;
  color: #c6cad0;
  font-size: 17px;
}

.panel-title.shift-s { padding-right: 20px; }
.panel-title.shift-l { padding-right: 30px; }

.more {
  position: absolute;
  right: 10px;
  color: #9aa0aa;
  font-size: 12px;
}

.more.near { right: 30px; }

.big {
  flex: none;
  display: flex;
  flex-direction: column;
  align-items: center;
}

.big-a {
  height: 46px;
  color: #e0e2e6;
  font-size: 56px;
  line-height: 46px;
}

.big-label {
  margin-top: 1px;
  color: #d6d9dd;
  font-size: 16px;
  line-height: 23px;
}

.big svg + .big-label,
.big-a + .big-label { margin-top: 5px; }

.big .caret.small { margin: 4px 0 0; }

.tool-col {
  flex: none;
  display: flex;
  flex-direction: column;
  gap: 5.5px;
}

.tool-row {
  width: fit-content;
  height: 28px;
  display: flex;
  align-items: center;
  gap: 6px;
}

.tool-row .caret.small { margin-left: 4px; }

.tool-row.on {
  outline: 1px solid #5a9ad8;
  background: #3f5770;
}

.tool-text {
  color: #d6d9dd;
  font-size: 17px;
}

.layer-wrap, .props-wrap {
  display: flex;
  flex: 1;
}

.layer-big { width: 60px; }

.layer-stack {
  display: flex;
  height: 46px;
  align-items: flex-end;
}

.layer-stack .layer-phone {
  margin-left: -14px;
  margin-bottom: -8px;
}

.layer-stack + .big-label { margin-top: 7px; }

.layer-right {
  width: 292px;
  margin-top: -2px;
  display: flex;
  flex-direction: column;
}

.combo {
  height: 30px;
  display: flex;
  align-items: center;
  background: #495264;
  color: #d6d9dd;
}

.layer-combo {
  gap: 4px;
  padding-left: 6px;
  height: 29px;
  flex: none;
  background: #4a5468;
}

.swatch {
  width: 13px;
  height: 17px;
  margin-left: 4px;
  background: #f4f4f4;
}

.swatch.wide {
  width: 22px;
  height: 21px;
  margin: 0 18px 0 16px;
}

.dash {
  width: 90px;
  height: 2px;
  margin: 0 3px 0 5px;
  background: #d6d9dd;
}

.combo-text {
  font-size: 16px;
}

.combo-caret {
  margin-left: auto;
  margin-right: 4px;
}

.layer-row {
  display: flex;
  gap: 10.5px;
  height: 35px;
  flex: none;
  align-items: center;
  padding-left: 4px;
}

.props-icons {
  width: 27px;
  flex: none;
  display: flex;
  flex-direction: column;
  gap: 6px;
}

.props-combos {
  width: 191px;
  flex: none;
  display: flex;
  flex-direction: column;
  gap: 3px;
  margin-left: 0;
}

.green-bar {
  width: 6px;
  height: 95px;
  margin: 6px 0 0 auto;
  background: #2fa84f;
  border-radius: 3px 0 0 3px;
}

.workspace {
  height: 705px;
  flex: none;
  display: flex;
}

.canvas {
  position: relative;
  width: 1845px;
  flex: none;
  background: #000;
  overflow: hidden;
}

.drawing {
  display: block;
  font-family: "Liberation Sans", "Noto Sans CJK SC", sans-serif;
}

.dim {
  fill: #e4e4e4;
  font-size: 13px;
  text-anchor: middle;
}

.axis-no {
  fill: #f2a898;
  font-size: 20px;
  text-anchor: middle;
}

.pile-tag {
  fill: #e8e8e8;
  font-size: 13px;
  font-weight: 700;
  text-anchor: middle;
}

.plan-title {
  fill: #bc1616;
  font-size: 32px;
  font-family: "Noto Sans CJK SC", sans-serif;
}

.plan-scale {
  fill: #b81818;
  font-size: 26px;
}

.view-label {
  fill: #c9c9c9;
  font-size: 15px;
}

.cube-label {
  fill: #8c8c8c;
  font-size: 16px;
  text-anchor: middle;
}

.wcs {
  fill: #646a78;
  font-size: 17px;
}

.title-card {
  position: absolute;
  left: 587px;
  top: 178px;
  width: 746px;
  height: 244px;
  padding-bottom: 12px;
  box-sizing: border-box;
  display: flex;
  align-items: center;
  justify-content: center;
  border-radius: 40px;
  background: #ffdd00;
  color: #000;
  font-family: "Noto Sans CJK SC", sans-serif;
  font-size: 125px;
  font-weight: 700;
  white-space: nowrap;
}

.cmdline {
  position: absolute;
  left: 438px;
  top: 667px;
  width: 969px;
  height: 38px;
  display: flex;
}

.cmd-over {
  position: absolute;
  left: 0;
  top: 0;
}

.cmd-left {
  width: 79px;
  flex: none;
  display: flex;
  align-items: center;
  gap: 6px;
  padding-left: 4px;
  box-sizing: border-box;
  background: #2f3541;
}

.grip {
  width: 6px;
  height: 20px;
  background: repeating-linear-gradient(#b8bcc4 0 2px, transparent 2px 4px);
}

.wrench { margin-left: 10px; }

.cmd-input {
  flex: 1;
  display: flex;
  align-items: center;
  padding: 0 0 5px 4px;
  box-sizing: border-box;
  background: #ababab;
  border-top: 1px solid #7a7a7a;
}

.cmd-text {
  margin-left: 17px;
  color: #5f6266;
  font-family: "Noto Sans CJK SC", sans-serif;
  font-size: 22px;
  font-style: italic;
  font-weight: 700;
  letter-spacing: 3px;
}

.cmd-up {
  margin-left: auto;
  margin-right: 5px;
  color: #555;
  font-size: 10px;
}

.palette {
  width: 74px;
  flex: none;
  display: flex;
  background: #3a414e;
}

.pal-col {
  width: 40px;
  flex: none;
  display: flex;
  flex-direction: column;
  align-items: center;
  padding-top: 4px;
  box-sizing: border-box;
  border-right: 2px solid #2a303a;
}

.pal-col.right {
  width: 34px;
  padding: 17px 0 0 8px;
  align-items: flex-start;
  border-right: 0;
  gap: 3px;
}

.pal-grip {
  width: 20px;
  height: 5px;
  margin-bottom: 8px;
  background: repeating-linear-gradient(90deg, #9aa0aa 0 2px, transparent 2px 4px);
}

.pal-tile {
  width: 23px;
  height: 23px;
  flex: none;
  margin-bottom: 8px;
}

.pal-tile.wide {
  width: 26px;
  height: 31px;
  margin-bottom: 0;
}

.pal-sep {
  width: 27px;
  height: 3px;
  flex: none;
  margin-bottom: 6px;
  background: #b4b8be;
}

.layoutbar {
  height: 42px;
  flex: none;
  display: flex;
  background: #1f2631;
  border-top: 1px solid #3a414e;
  box-sizing: border-box;
}

.layout-tabs {
  display: flex;
  padding-left: 22px;
  gap: 5px;
  align-items: flex-start;
}

.ltab {
  width: 76px;
  height: 25px;
  display: flex;
  align-items: center;
  justify-content: center;
  background: #2c333f;
  border-radius: 0 0 6px 8px;
  color: #a3a8b0;
  font-size: 16px;
}

.ltab.active {
  width: 54px;
  background: #38404d;
  color: #e3e5e8;
}

.ltab.add {
  width: 24px;
  margin-left: 8px;
  font-size: 18px;
}

.coordbox {
  width: 390px;
  height: 33px;
  margin: 1px 0 0 auto;
  display: flex;
  align-items: center;
  background: #39404c;
  color: #d6d9dd;
  white-space: nowrap;
}

.scale-box {
  width: 100px;
  height: 100%;
  flex: none;
  display: flex;
  align-items: center;
  justify-content: center;
  border-right: 1px solid #222832;
  font-size: 16px;
}

.coords {
  margin-left: 43px;
  font-size: 17px;
}

.statusbar {
  height: 36px;
  flex: none;
  display: flex;
  background: #1f2631;
}

.st-group {
  flex: none;
  display: flex;
  background: #3a414e;
  border-radius: 2px;
}

.st-item {
  height: 100%;
  flex: none;
  display: flex;
  align-items: center;
  justify-content: center;
  color: #d6d9dd;
  font-size: 16px;
  white-space: nowrap;
}

.st-item.on { background: #5a89bd; }

.st-item .caret.small { margin: 0; }

.taskbar {
  flex: 1;
  display: flex;
  align-items: center;
  background: linear-gradient(90deg, #0b5b86 0%, #0b5a88 45%, #0b4a7c 70%, #0a3867 100%);
}

.start { margin-left: 17px; }

.tb-browser {
  width: 204px;
  height: 50px;
  margin-left: 16px;
  display: flex;
  align-items: center;
  gap: 4px;
  padding-left: 11px;
  box-sizing: border-box;
  background: #eceef0;
  color: #222;
  font-size: 17px;
  white-space: nowrap;
}

.ai-badge {
  width: 20px;
  height: 26px;
  flex: none;
  border-radius: 7px;
  background: linear-gradient(120deg, #3f86ee, #9a5ce8);
  color: #fff;
  font-size: 12px;
  font-weight: 700;
  line-height: 26px;
  text-align: center;
}

.tb-search {
  width: 81px;
  height: 50px;
  flex: none;
  display: flex;
  align-items: center;
  justify-content: center;
  background: #0a7de8;
  color: #d9ecff;
  font-size: 15px;
}

.tb-app {
  width: 221px;
  height: 50px;
  flex: none;
  margin-left: 5px;
  display: flex;
  align-items: center;
  background: #3f7a90;
  border-bottom: 2px solid #8fc0d0;
  box-sizing: border-box;
}

.tb-app.active {
  width: 223px;
  margin-left: 7px;
  background: #5c93a8;
}

.tb-cad {
  width: 43px;
  height: 46px;
  margin-left: 14px;
  display: flex;
  align-items: center;
  justify-content: center;
  background: #f2ece8;
  color: #b8281e;
  font-size: 38px;
}

.tb-rec { margin-left: 13px; }

.tb-label {
  margin-left: 8px;
  color: #c8dce4;
  font-size: 15px;
  white-space: nowrap;
}

.tray-ime {
  margin-left: 513px;
  display: flex;
  align-items: center;
  gap: 10px;
  color: #e6eef5;
  font-size: 20px;
}

.ime-pin {
  background: #e8e8e8;
  color: #222;
  font-size: 16px;
  padding: 0 1px;
}

.ime-dot { font-weight: 700; }

.tray-icons {
  margin-left: 43px;
  display: flex;
  align-items: center;
}

.clock {
  margin-left: auto;
  padding-right: 22px;
  display: flex;
  flex-direction: column;
  align-items: center;
  gap: 8px;
  color: #d8e4ee;
  font-size: 17.5px;
  line-height: 18px;
}
</style>
